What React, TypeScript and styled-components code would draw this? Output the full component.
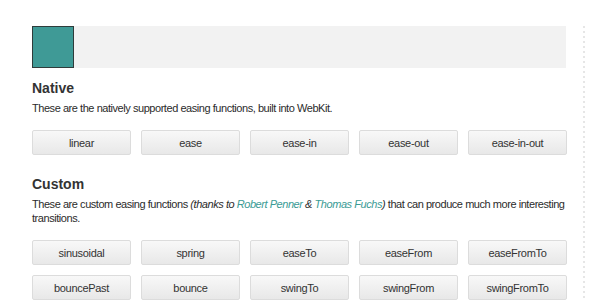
import styled, { createGlobalStyle } from 'styled-components';

const nativeEasings = ['linear', 'ease', 'ease-in', 'ease-out', 'ease-in-out'];

const customEasings = [
  'sinusoidal',
  'spring',
  'easeTo',
  'easeFrom',
  'easeFromTo',
  'bouncePast',
  'bounce',
  'swingTo',
  'swingFrom',
  'swingFromTo',
];

const GlobalStyle = createGlobalStyle`
  html, body {
    margin: 0;
    padding: 0;
    background: #fff;
  }

  body {
    font-family: "Liberation Sans", Arial, Helvetica, sans-serif;
    color: #333;
    -webkit-font-smoothing: antialiased;
  }
`;

const App = () => {
  return (
    <>
      <GlobalStyle />
      <Page>
        <Main>
          <Track>
            <Ball />
          </Track>

          <Section>
            <Title>Native</Title>
            <Description>These are the natively supported easing functions, built into WebKit.</Description>
            <ButtonGrid>
              {nativeEasings.map((name) => (
                <EaseButton key={name}>{name}</EaseButton>
              ))}
            </ButtonGrid>
          </Section>

          <Section>
            <Title>Custom</Title>
            <Description>
              <span>These are custom easing functions </span>
              <Aside>(thanks to </Aside>
              <Link href="#">Robert Penner</Link>
              <Aside> &amp; </Aside>
              <Link href="#">Thomas Fuchs</Link>
              <Aside>)</Aside>
              <span> that can produce much more interesting transitions.</span>
            </Description>
            <ButtonGrid>
              {customEasings.map((name) => (
                <EaseButton key={name}>{name}</EaseButton>
              ))}
            </ButtonGrid>
          </Section>
        </Main>
        <Divider />
      </Page>
    </>
  );
};

export default App;

const Page = styled.div`
  display: flex;
  align-items: flex-start;
  padding: 26px 0 0 32px;
  height: 300px;
  box-sizing: border-box;
  overflow: hidden;
`;

const Main = styled.main`
  width: 534px;
  display: flex;
  flex-direction: column;
`;

const Divider = styled.div`
  margin-left: 17px;
  width: 2px;
  height: 300px;
  background: repeating-linear-gradient(to bottom, #e6e6e6 0 2px, transparent 2px 5px);
`;

const Track = styled.div`
  height: 42px;
  background: #f2f2f2;
  display: flex;
`;

const Ball = styled.div`
  width: 42px;
  height: 42px;
  box-sizing: border-box;
  background: #3f9a96;
  border: 1px solid #2f3c3b;
`;

const Section = styled.section`
  margin-top: 11px;

  & + & {
    margin-top: 20px;
  }
`;

const Title = styled.h2`
  margin: 0;
  font-size: 14px;
  line-height: 18px;
  font-weight: bold;
  color: #333;
`;

const Description = styled.p`
  margin: 4px 0 0;
  font-size: 11px;
  line-height: 14px;
  letter-spacing: -0.45px;
  color: #2b2b2b;
`;

const Aside = styled.i`
  font-style: italic;
`;

const Link = styled.a`
  color: #3a9b95;
  font-style: italic;
  text-decoration: none;
`;

const ButtonGrid = styled.div`
  margin-top: 15px;
  display: grid;
  grid-template-columns: repeat(5, 99px);
  column-gap: 10px;
  row-gap: 10px;
`;

const EaseButton = styled.button`
  height: 25px;
  padding: 0;
  box-sizing: border-box;
  border: 1px solid #dcdcdc;
  border-radius: 2px;
  background: linear-gradient(to bottom, #f8f8f8, #e8e8e8);
  font-family: "Liberation Sans", Arial, Helvetica, sans-serif;
  font-size: 11px;
  letter-spacing: -0.3px;
  color: #333;
  text-align: center;
  cursor: pointer;
`;
